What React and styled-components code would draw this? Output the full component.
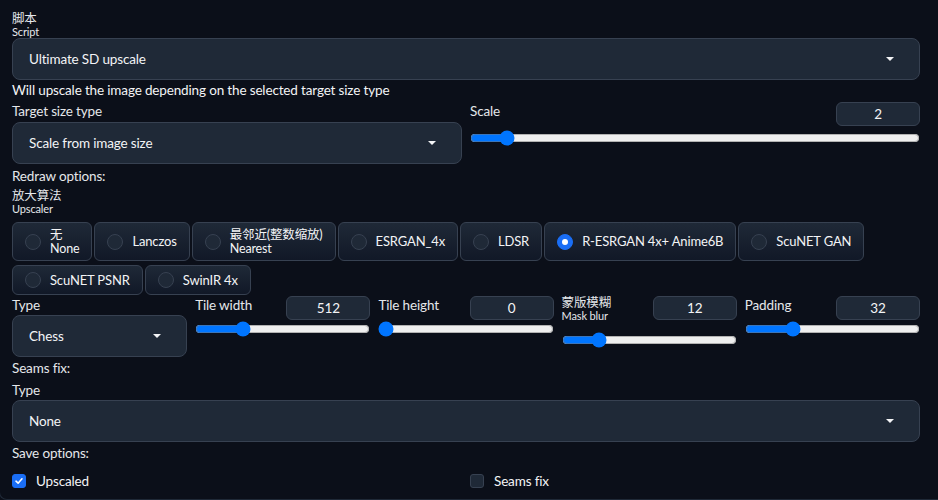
import React from "react";
import styled, { createGlobalStyle } from "styled-components";

const GlobalStyle = createGlobalStyle`
  html, body {
    margin: 0;
    padding: 0;
    background: #0b0f19;
  }
  body {
    font-family: "Source Sans Pro", Lato, "Noto Sans CJK SC", sans-serif;
    color: #e5e7eb;
    letter-spacing: -0.15px;
  }
  * {
    box-sizing: border-box;
  }
`;

const Panel = styled.div`
  width: 960px;
  height: 500px;
  padding: 12px 0 0 12px;
  border-left: 1px solid #1f2937;
  border-bottom: 1px solid #1f2937;
  border-bottom-left-radius: 8px;
  margin-left: -1px;
  overflow: hidden;
`;

const Content = styled.div`
  width: 908px;
  display: flex;
  flex-direction: column;
`;

const DualLabel = styled.div`
  display: flex;
  flex-direction: column;
  margin-top: ${(p) => p.$top || 0}px;
`;

const CjkLine = styled.span`
  font-size: 12.5px;
  line-height: 14px;
  color: #e5e7eb;
`;

const SubLine = styled.span`
  font-size: 11px;
  line-height: 12px;
  color: #e5e7eb;
`;

const Label = styled.div`
  font-size: 13.5px;
  line-height: 20px;
  color: #e5e7eb;
  margin-top: ${(p) => p.$top || 0}px;
  white-space: nowrap;
`;

const Info = styled(Label)`
  color: #f3f4f6;
`;

const Select = styled.div`
  height: 42px;
  display: flex;
  align-items: center;
  justify-content: space-between;
  padding: 0 25px 0 16px;
  background: #1f2937;
  border: 1px solid #374151;
  border-radius: 8px;
  font-size: 13.5px;
  color: #f3f4f6;
  margin-top: ${(p) => p.$top || 0}px;
`;

const Caret = styled.span`
  width: 0;
  height: 0;
  border-left: 4px solid transparent;
  border-right: 4px solid transparent;
  border-top: 4px solid #f3f4f6;
`;

const Columns = styled.div`
  display: grid;
  grid-template-columns: repeat(${(p) => p.$n}, 1fr);
  column-gap: 8px;
  margin-top: ${(p) => p.$top || 0}px;
`;

const Field = styled.div`
  display: flex;
  flex-direction: column;
  min-width: 0;
`;

const SliderHead = styled.div`
  display: flex;
  justify-content: space-between;
  align-items: flex-start;
  height: ${(p) => p.$h}px;
`;

const NumberBox = styled.div`
  width: 84px;
  height: 24px;
  margin-top: 1px;
  display: flex;
  align-items: center;
  justify-content: center;
  background: #1f2937;
  border: 1px solid #374151;
  border-radius: 6px;
  font-size: 13.5px;
  color: #f3f4f6;
`;

const Range = styled.input`
  display: block;
  width: 100%;
  margin: ${(p) => p.$top || 0}px 0 0 0;
  color-scheme: light;
`;

const RadioGroup = styled.div`
  display: flex;
  flex-wrap: wrap;
  gap: 4px 2px;
  margin-top: 7px;
`;

const RadioItem = styled.label`
  display: flex;
  align-items: center;
  gap: 9px;
  padding: 4px 12px 4px 12px;
  min-height: 30px;
  border: 1px solid #374151;
  border-radius: 6px;
  background: linear-gradient(to bottom, #1f2937, #111827);
  font-size: 13px;
  color: #f3f4f6;
`;

const RadioDot = styled.span`
  flex: none;
  width: 16px;
  height: 16px;
  border-radius: 50%;
  border: 1px solid ${(p) => (p.$on ? "#1a6ef5" : "#374151")};
  background: ${(p) => (p.$on ? "#1a6ef5" : "#1f2937")};
  display: flex;
  align-items: center;
  justify-content: center;
  &::after {
    content: "";
    width: 6px;
    height: 6px;
    border-radius: 50%;
    background: #ffffff;
    display: ${(p) => (p.$on ? "block" : "none")};
  }
`;

const RadioText = styled.span`
  display: flex;
  flex-direction: column;
  line-height: 15px;
`;

const RadioMain = styled.span`
  font-size: ${(p) => (p.$cjk ? "12.5px" : "inherit")};
`;

const RadioSub = styled.span`
  font-size: 12.5px;
  line-height: 14px;
`;

const CheckRow = styled.div`
  display: grid;
  grid-template-columns: 1fr 1fr;
  column-gap: 8px;
  margin-top: 11px;
`;

const CheckItem = styled.label`
  display: flex;
  align-items: center;
  gap: 10px;
  font-size: 13.5px;
  color: #f3f4f6;
  height: 14px;
`;

const CheckBox = styled.span`
  width: 14px;
  height: 14px;
  border-radius: 3px;
  border: 1px solid ${(p) => (p.$on ? "#1a6ef5" : "#374151")};
  background: ${(p) => (p.$on ? "#1a6ef5" : "#1f2937")};
  display: flex;
  align-items: center;
  justify-content: center;
`;

const upscalers = [
  { name: "无", sub: "None" },
  { name: "Lanczos" },
  { name: "最邻近(整数缩放)", sub: "Nearest" },
  { name: "ESRGAN_4x" },
  { name: "LDSR" },
  { name: "R-ESRGAN 4x+ Anime6B", on: true },
  { name: "ScuNET GAN" },
  { name: "ScuNET PSNR" },
  { name: "SwinIR 4x" },
];

const SliderField = ({ label, value, min, max, pos, top }) => (
  <Field>
    <SliderHead $h={label.sub ? 33 : 26}>
      {label.sub ? (
        <DualLabel $top={1}>
          <CjkLine>{label.name}</CjkLine>
          <SubLine>{label.sub}</SubLine>
        </DualLabel>
      ) : (
        <Label>{label.name}</Label>
      )}
      <NumberBox>{value}</NumberBox>
    </SliderHead>
    <Range type="range" min={min} max={max} defaultValue={pos} $top={top} readOnly />
  </Field>
);

export default function App() {
  return (
    <>
      <GlobalStyle />
      <Panel>
        <Content>
          <DualLabel>
            <CjkLine>脚本</CjkLine>
            <SubLine>Script</SubLine>
          </DualLabel>
          <Select>
            Ultimate SD upscale
            <Caret />
          </Select>
          <Info>Will upscale the image depending on the selected target size type</Info>

          <Columns $n={2} $top={1}>
            <Field>
              <Label>Target size type</Label>
              <Select $top={1}>
                Scale from image size
                <Caret />
              </Select>
            </Field>
            <SliderField label={{ name: "Scale" }} value="2" min={1} max={16} pos={2} top={3} />
          </Columns>

          <Label $top={2}>Redraw options:</Label>
          <DualLabel $top={3}>
            <CjkLine>放大算法</CjkLine>
            <SubLine>Upscaler</SubLine>
          </DualLabel>
          <RadioGroup>
            {upscalers.map((u) => (
              <RadioItem key={u.name}>
                <RadioDot $on={u.on} />
                <RadioText>
                  <RadioMain $cjk={!!u.sub}>{u.name}</RadioMain>
                  {u.sub && <RadioSub>{u.sub}</RadioSub>}
                </RadioText>
              </RadioItem>
            ))}
          </RadioGroup>

          <Columns $n={5}>
            <Field>
              <Label>Type</Label>
              <Select>
                Chess
                <Caret />
              </Select>
            </Field>
            <SliderField label={{ name: "Tile width" }} value="512" min={0} max={2048} pos={512} top={0} />
            <SliderField label={{ name: "Tile height" }} value="0" min={0} max={2048} pos={0} top={0} />
            <SliderField label={{ name: "蒙版模糊", sub: "Mask blur" }} value="12" min={0} max={64} pos={12} top={4} />
            <SliderField label={{ name: "Padding" }} value="32" min={0} max={128} pos={32} top={0} />
          </Columns>

          <Label $top={1}>Seams fix:</Label>
          <Label $top={2}>Type</Label>
          <Select>
            None
            <Caret />
          </Select>
          <Label $top={1}>Save options:</Label>
          <CheckRow>
            <CheckItem>
              <CheckBox $on>
                <svg width="10" height="10" viewBox="0 0 10 10">
                  <path d="M2 5.2 L4.1 7.2 L8 2.8" fill="none" stroke="#ffffff" strokeWidth="1.6" strokeLinecap="round" strokeLinejoin="round" />
                </svg>
              </CheckBox>
              Upscaled
            </CheckItem>
            <CheckItem>
              <CheckBox />
              Seams fix
            </CheckItem>
          </CheckRow>
        </Content>
      </Panel>
    </>
  );
}
